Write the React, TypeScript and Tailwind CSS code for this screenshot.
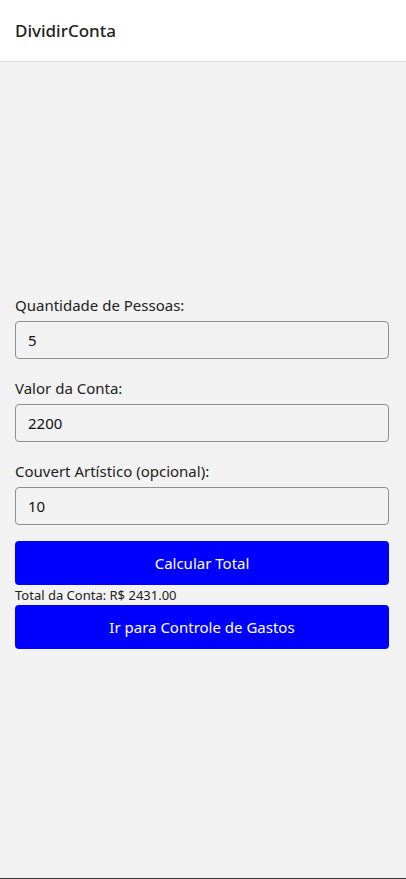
import { useState } from "react";

function Field({ label, value, onChange }: { label: string; value: string; onChange: (v: string) => void }) {
  return (
    <div className="flex flex-col">
      <label className="text-[15px] leading-5 text-[#222] mb-[6px]">{label}</label>
      <input
        type="number"
        value={value}
        onChange={(e) => onChange(e.target.value)}
        className="h-[38px] w-full rounded-[4px] border border-[#8f8f8f] bg-[#f2f2f2] px-3 text-[15px] text-[#111] outline-none"
      />
    </div>
  );
}

export default function App() {
  const [pessoas, setPessoas] = useState("5");
  const [valor, setValor] = useState("2200");
  const [couvert, setCouvert] = useState("10");
  const [total] = useState("2431.00");

  return (
    <div
      className="min-h-screen flex flex-col bg-[#f2f2f2] text-[#222]"
      style={{ fontFamily: '"Noto Sans", "Open Sans", sans-serif' }}
    >
      <header className="h-[62px] shrink-0 bg-white border-b border-[#e0e0e0] flex items-center px-[15px]">
        <span className="text-[17px] font-medium text-[#222]">DividirConta</span>
      </header>
      <main className="flex-1 flex flex-col justify-center pl-[15px] pr-[17px] pt-[4px] border-b border-[#333]">
        <div className="flex flex-col gap-[19px]">
          <Field label="Quantidade de Pessoas:" value={pessoas} onChange={setPessoas} />
          <Field label="Valor da Conta:" value={valor} onChange={setValor} />
          <Field label="Couvert Artístico (opcional):" value={couvert} onChange={setCouvert} />
        </div>
        <button className="mt-4 h-[44px] w-full rounded-[4px] bg-[#0000ff] text-white text-[15px]">
          Calcular Total
        </button>
        <p className="text-[13px] leading-5 text-[#222]">Total da Conta: R$ {total}</p>
        <button className="h-[44px] w-full rounded-[4px] bg-[#0000ff] text-white text-[15px]">
          Ir para Controle de Gastos
        </button>
      </main>
    </div>
  );
}
